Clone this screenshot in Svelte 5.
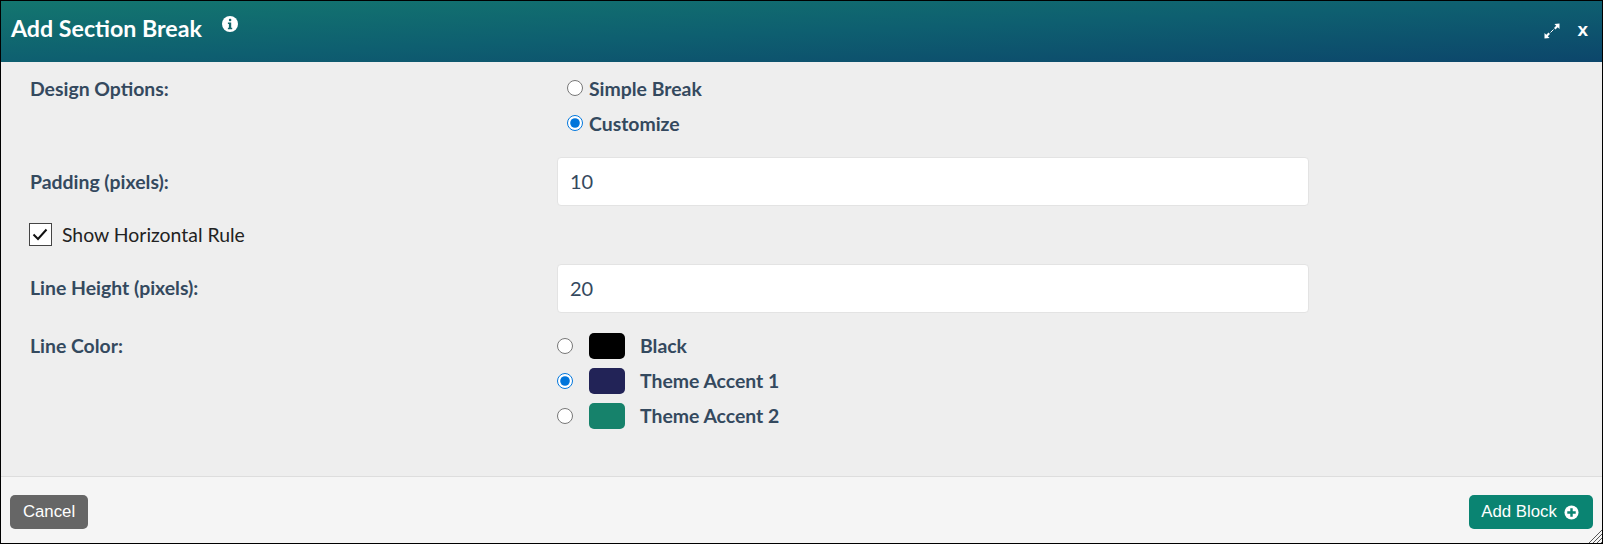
<script>
  const colors = [
    { name: 'Black', color: '#000000', checked: false },
    { name: 'Theme Accent 1', color: '#222357', checked: true },
    { name: 'Theme Accent 2', color: '#16826b', checked: false }
  ];
</script>

<div class="modal">
  <header class="head">
    <h1>Add Section Break</h1>
    <svg class="info" viewBox="0 0 16 16" aria-hidden="true">
      <circle cx="8" cy="8" r="8" fill="#fff" />
      <rect x="6.900" y="2.800" width="2.400" height="2.400" rx="1" fill="#14676c" />
      <path d="M5.900 6.600h3.300v5.200h1v1.500H5.900v-1.500h1V8.100h-1z" fill="#14676c" />
    </svg>
    <div class="spacer"></div>
    <svg class="expand" viewBox="0 0 16 16" aria-hidden="true">
      <path d="M0.500 15.500v-5.500l1.800 1.800 2.200-2.200 1.500 1.500-2.200 2.200 1.800 1.800zM15.500 0.500v5.500l-1.800-1.800-2.200 2.200-1.500-1.500 2.200-2.200-1.800-1.800z" fill="#fff" />
      <path d="M6.500 9.500l3-3" stroke="#fff" stroke-width="1" />
    </svg>
    <span class="close">x</span>
  </header>

  <main class="body">
    <div class="row design">
      <span class="label">Design Options:</span>
      <div class="options">
        <label class="opt"><input type="radio" name="design" />Simple Break</label>
        <label class="opt"><input type="radio" name="design" checked />Customize</label>
      </div>
    </div>

    <div class="row field first">
      <span class="label">Padding (pixels):</span>
      <input class="text" type="text" value="10" />
    </div>

    <label class="check">
      <span class="box">
        <svg viewBox="0 0 20 20" aria-hidden="true"><path d="M3.500 10.500l4.500 4.500 8.500-9.500" fill="none" stroke="#111" stroke-width="2" /></svg>
      </span>
      Show Horizontal Rule
    </label>

    <div class="row field second">
      <span class="label">Line Height (pixels):</span>
      <input class="text" type="text" value="20" />
    </div>

    <div class="row lines">
      <span class="label">Line Color:</span>
      <div class="swatches">
        {#each colors as c}
          <label class="swatch-row">
            <input type="radio" name="line" checked={c.checked} />
            <span class="swatch" style="background:{c.color}"></span>
            <span class="swatch-name">{c.name}</span>
          </label>
        {/each}
      </div>
    </div>
  </main>

  <footer class="foot">
    <button class="btn cancel">Cancel</button>
    <button class="btn add">Add Block
      <svg viewBox="0 0 16 16" aria-hidden="true">
        <circle cx="8" cy="8" r="7.500" fill="#fff" />
        <path d="M6.700 3.500h2.600v3.200h3.200v2.600H9.300v3.200H6.700V9.300H3.500V6.700h3.200z" fill="#0a8472" />
      </svg>
    </button>
    <svg class="grip" viewBox="0 0 14 14" aria-hidden="true">
      <path d="M14 1L1 14M14 5L5 14M14 9L9 14M14 13l-1 1" stroke="#555" stroke-width="1" fill="none" />
    </svg>
  </footer>
</div>

<style>
  :global(body) { margin: 0; background: #fff; }
  .modal {
    position: relative;
    box-sizing: border-box;
    width: 1603px;
    height: 544px;
    border: 1px solid #000;
    display: flex;
    flex-direction: column;
    font-family: Lato, sans-serif;
    background: #eeeeee;
  }
  .head {
    height: 61px;
    flex: none;
    display: flex;
    align-items: flex-start;
    color: #fff;
    background: linear-gradient(to bottom right, #13766f 0%, #0e5f70 50%, #0c466b 100%);
  }
  h1 {
    margin: 12px 0 0 10px;
    font-size: 23.200px;
    line-height: 30px;
    font-weight: 700;
  }
  .info { width: 16px; height: 16px; margin: 15px 0 0 20px; }
  .spacer { flex: 1; }
  .expand { width: 16px; height: 16px; margin: 22px 0 0 0; }
  .close {
    font-family: "Liberation Sans", sans-serif;
    font-weight: 700;
    font-size: 19px;
    line-height: 20px;
    margin: 19px 14px 0 17px;
  }
  .body { flex: 1; padding: 0 29px; color: #2c3e50; }
  .row { display: grid; grid-template-columns: 527px 752px; }
  .label { font-weight: 700; font-size: 19.400px; line-height: 24px; color: #34495e; }
  .design { padding-top: 14px; }
  .design .label { padding-top: 1px; }
  .options { display: flex; flex-direction: column; gap: 11px; }
  .opt {
    display: flex;
    align-items: center;
    height: 24px;
    font-weight: 700;
    font-size: 19.400px;
    color: #34495e;
  }
  input[type="radio"] {
    width: 16px;
    height: 16px;
    margin: 0 6px 0 10px;
    accent-color: #0075db;
  }
  .field { align-items: center; height: 49px; }
  .first { margin-top: 22px; }
  .second .label { padding-bottom: 2px; }
  .text {
    box-sizing: border-box;
    width: 752px;
    height: 49px;
    border: 1px solid #e3e3e3;
    border-radius: 4px;
    background: #fff;
    padding: 0 12px 2px;
    font: 400 20px Lato, sans-serif;
    color: #34495e;
  }
  .check {
    display: flex;
    align-items: center;
    height: 24px;
    margin: 16px 0 18px;
    font-size: 19.400px;
    color: #222;
  }
  .box {
    box-sizing: border-box;
    width: 23px;
    height: 23px;
    margin: 0 10px 0 -1px;
    border: 1.500px solid #444;
    background: #fff;
    display: block;
  }
  .box svg { display: block; width: 20px; height: 20px; }
  .lines { margin-top: 19px; }
  .lines .label { padding-top: 2px; }
  .swatches { display: flex; flex-direction: column; gap: 8px; }
  .swatch-row { display: flex; align-items: center; height: 27px; }
  .swatch-row input { margin: 0 16px 0 0; }
  .swatch { width: 36px; height: 26px; border-radius: 5px; margin-right: 15px; }
  .swatch-name { font-weight: 700; font-size: 19.400px; color: #34495e; }
  .foot {
    position: relative;
    box-sizing: border-box;
    height: 67px;
    flex: none;
    border-top: 1px solid #dddddd;
    background: #f5f5f5;
    display: flex;
    justify-content: space-between;
    align-items: flex-start;
    padding: 18px 9px 0;
  }
  .btn {
    height: 34px;
    border: 0;
    border-radius: 5px;
    color: #fff;
    font: 400 16.800px "Liberation Sans", sans-serif;
    display: flex;
    align-items: center;
    justify-content: center;
    padding: 0;
  }
  .cancel { width: 78px; background: #666666; }
  .add { box-sizing: border-box; width: 124px; background: #0a8472; gap: 7px; padding-right: 2px; }
  .add svg { width: 15px; height: 15px; }
  .grip { position: absolute; right: 0; bottom: 0; width: 14px; height: 14px; }
</style>
